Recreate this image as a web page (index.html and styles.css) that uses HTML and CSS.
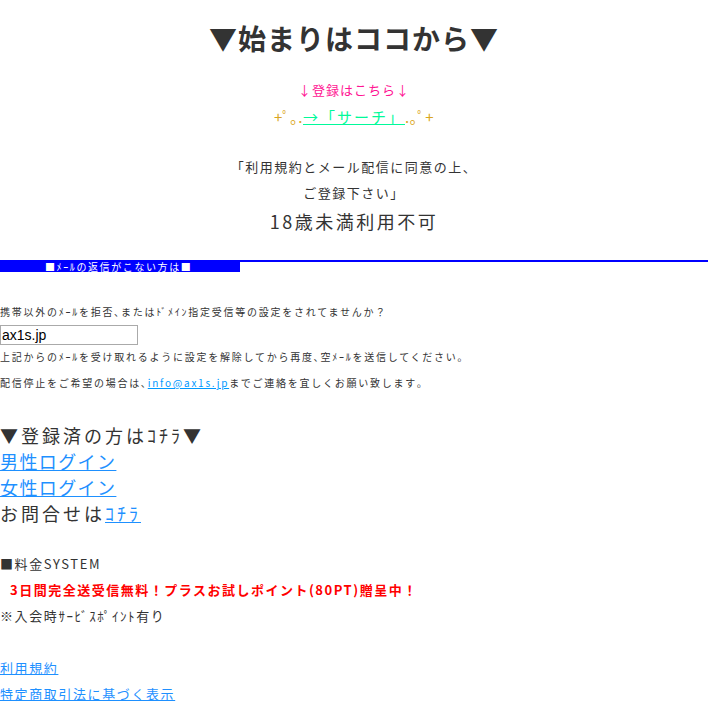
FILE: index.html
```html
<!DOCTYPE html>
<html lang="ja">
<head>
<meta charset="utf-8">
<link rel="stylesheet" href="styles.css">
</head>
<body>
<div class="top">
  <h1 class="title">▼始まりはココから▼</h1>
  <p class="reg">↓登録はこちら↓</p>
  <p class="search"><span class="deco">+ﾟ｡.</span><a href="#" class="search-link">→「サーチ」</a><span class="deco">.｡ﾟ+</span></p>
  <p class="agree">「利用規約とメール配信に同意の上、<br>ご登録下さい」</p>
  <p class="age">18歳未満利用不可</p>
</div>
<div class="bar-wrap"><div class="bar">■ﾒｰﾙの返信がこない方は■</div></div>
<div class="mail">
  <p class="small q">携帯以外のﾒｰﾙを拒否､またはﾄﾞﾒｲﾝ指定受信等の設定をされてませんか？</p>
  <input class="domain" type="text" value="ax1s.jp">
  <p class="small l2">上記からのﾒｰﾙを受け取れるように設定を解除してから再度､空ﾒｰﾙを送信してください｡</p>
  <p class="small l3">配信停止をご希望の場合は､<a href="#" class="mlink">info@ax1s.jp</a>までご連絡を宜しくお願い致します｡</p>
</div>
<div class="login">
  <p class="big wide">▼登録済の方はｺﾁﾗ▼</p>
  <p class="big"><a href="#">男性ログイン</a></p>
  <p class="big"><a href="#">女性ログイン</a></p>
  <p class="big wide">お問合せは<a href="#">ｺﾁﾗ</a></p>
</div>
<div class="price">
  <p class="mid">■料金SYSTEM</p>
  <p class="free">3日間完全送受信無料！プラスお試しポイント(80PT)贈呈中！</p>
  <p class="mid">※入会時ｻｰﾋﾞｽﾎﾟｲﾝﾄ有り</p>
</div>
<div class="foot">
  <p class="mid"><a href="#">利用規約</a></p>
  <p class="mid"><a href="#">特定商取引法に基づく表示</a></p>
</div>
</body>
</html>
```
FILE: styles.css
```css
html, body { margin: 0; padding: 0; background: #fff; }
body {
  font-family: "Noto Sans CJK JP", "Noto Sans", sans-serif;
  color: #333;
  width: 708px;
}
p { margin: 0; }
a { color: #1e90ff; text-decoration: underline; }
.top { text-align: center; padding-top: 17px; }
.title {
  margin: 0;
  font-size: 28px;
  line-height: 42px;
  font-weight: bold;
  color: #333;
  letter-spacing: 1px;
}
.reg {
  margin-top: 21px;
  color: #ff1493;
  font-size: 13px;
  line-height: 20px;
  letter-spacing: 1px;
}
.search {
  margin-top: 6px;
  font-size: 15px;
  line-height: 22px;
  letter-spacing: 2px;
}
.deco { color: #daa520; letter-spacing: 0.5px; }
.search-link { color: #00fa9a; }
.agree {
  margin-top: 26px;
  font-size: 13px;
  line-height: 26px;
  letter-spacing: 1.5px;
}
.age {
  margin-top: 2px;
  font-size: 18px;
  line-height: 26px;
  letter-spacing: 2.5px;
}
.bar-wrap {
  margin-top: 26px;
  border-top: 2px solid #0000ff;
}
.bar {
  width: 240px;
  height: 10px;
  background: #0000ff;
  color: #fff;
  font-size: 10px;
  line-height: 10px;
  box-sizing: border-box;
  padding-left: 45px;
  letter-spacing: 1.6px;
  white-space: nowrap;
}
.mail { padding-top: 33px; }
.small {
  font-size: 10px;
  line-height: 14px;
  letter-spacing: 1.75px;
  color: #333;
}
.domain {
  display: block;
  margin: 6px 0 0 0;
  width: 138px;
  height: 20px;
  box-sizing: border-box;
  border: 1px solid #aaa;
  padding: 0 1px;
  font-family: "Liberation Sans", Arial, sans-serif;
  font-size: 14px;
  color: #000;
  outline: none;
}
.l2 { margin-top: 5px; }
.l3 { margin-top: 12px; }
.mlink { color: #0099ff; }
.login { padding-top: 32px; }
.big {
  font-size: 18px;
  line-height: 26px;
  height: 26px;
  letter-spacing: 1.4px;
  color: #333;
  white-space: nowrap;
}
.big.wide { letter-spacing: 3px; }
.price { padding-top: 25px; }
.mid {
  font-size: 13px;
  line-height: 26px;
  height: 26px;
  letter-spacing: 1.6px;
  color: #333;
}
.free {
  color: #ff0000;
  font-weight: bold;
  font-size: 13px;
  line-height: 26px;
  height: 26px;
  padding-left: 10px;
  letter-spacing: 1.5px;
}
.foot { padding-top: 26px; }
```
